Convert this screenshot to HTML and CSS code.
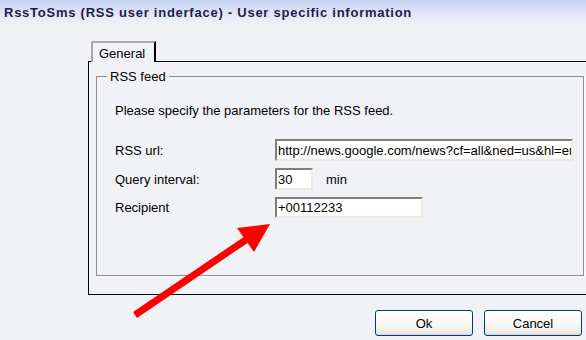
FILE: index.html
```html
<!DOCTYPE html>
<html lang="en">
<head>
  <meta charset="UTF-8" />
  <title>RssToSms - User specific information</title>
  <link rel="stylesheet" href="styles.css">
</head>
<body>
  <div class="titlebar">RssToSms (RSS user inderface) - User specific information</div>

  <div class="dialog">
    <div class="tab">General</div>
    <div class="pane">
      <fieldset class="group">
        <legend>RSS feed</legend>
        <p class="intro">Please specify the parameters for the RSS feed.</p>
        <div class="form">
          <label>RSS url:</label>
          <input class="field url" type="text" value="http://news.google.com/news?cf=all&amp;ned=us&amp;hl=en&amp;output=rss">
          <label>Query interval:</label>
          <div class="inline">
            <input class="field short" type="text" value="30">
            <span>min</span>
          </div>
          <label>Recipient</label>
          <input class="field phone" type="text" value="+00112233">
        </div>
      </fieldset>
    </div>
  </div>

  <div class="buttons">
    <button class="btn">Ok</button>
    <button class="btn">Cancel</button>
  </div>

  <!-- annotation arrow drawn over the dialog -->
  <svg class="arrow" width="586" height="340" viewBox="0 0 586 340">
    <line x1="135" y1="315" x2="250" y2="237" stroke="#ff0000" stroke-width="7" />
    <polygon points="270,224 237,228 254,252" fill="#ff0000" />
  </svg>
</body>
</html>
```

FILE: styles.css
```css
html, body {
  margin: 0;
  padding: 0;
  width: 586px;
  height: 340px;
  overflow: hidden;
  background: #f1f2f6;
  color: #000;
  font-family: 'Liberation Sans', Arial, sans-serif;
  font-size: 13px;
}

body {
  position: relative;
}

.titlebar {
  height: 26px;
  line-height: 26px;
  padding-left: 4px;
  font-weight: bold;
  font-size: 13px;
  letter-spacing: 0.75px;
  color: #1d1d4f;
  background: linear-gradient(#c4d1f2, #e3e8f6 55%, #f1f2f7);
}

.dialog {
  padding: 15px 0 0 88px;
}

.tab {
  position: relative;
  z-index: 1;
  box-sizing: border-box;
  width: 65px;
  height: 21px;
  margin: 0 0 -1px 3px;
  padding: 2px 0 0 6px;
  line-height: 17px;
  border-top: 2px solid #a8a8a8;
  border-left: 2px solid #a8a8a8;
  border-right: 2px solid #000;
  background: #f1f2f6;
}

.pane {
  box-sizing: border-box;
  height: 234px;
  margin-right: -20px;
  padding: 7px 0 0 7px;
  border: 1px solid #000;
  border-right: none;
}

.group {
  box-sizing: border-box;
  width: 488px;
  height: 207px;
  margin: 0;
  padding: 0 0 0 18px;
  border: 1px solid #8e8e8e;
  box-shadow: 1px 1px 0 #fff;
}

.group legend {
  margin-left: -8px;
  padding: 0 3px;
  line-height: 15px;
}

.intro {
  margin: 19px 0 20px;
  line-height: 16px;
}

.form {
  display: grid;
  grid-template-columns: 160px auto;
  row-gap: 7px;
  align-items: center;
}

.inline {
  display: flex;
  align-items: center;
  gap: 13px;
}

.field {
  box-sizing: border-box;
  height: 22px;
  margin: 0;
  padding: 0 0 0 1px;
  font-family: 'Liberation Sans', Arial, sans-serif;
  font-size: 13px;
  color: #000;
  background: #fff;
  border-top: 2px solid #7e7d78;
  border-left: 2px solid #7e7d78;
  border-right: 2px solid #ece9de;
  border-bottom: 2px solid #ece9de;
  outline: none;
}

.field.url {
  width: 298px;
}

.field.short {
  width: 38px;
}

.field.phone {
  width: 148px;
  height: 21px;
}

.buttons {
  display: flex;
  justify-content: flex-end;
  gap: 11px;
  padding: 15px 4px 0 0;
}

.btn {
  box-sizing: border-box;
  width: 98px;
  height: 26px;
  padding: 0;
  font-family: 'Liberation Sans', Arial, sans-serif;
  font-size: 13px;
  color: #000;
  border: 1px solid #003c74;
  border-radius: 3px;
  background: linear-gradient(#ffffff, #f7f7f4 60%, #e6e4dc);
  box-shadow: inset 0 -1px 0 #d6d3c8;
}

.arrow {
  position: absolute;
  top: 0;
  left: 0;
  pointer-events: none;
}
```
